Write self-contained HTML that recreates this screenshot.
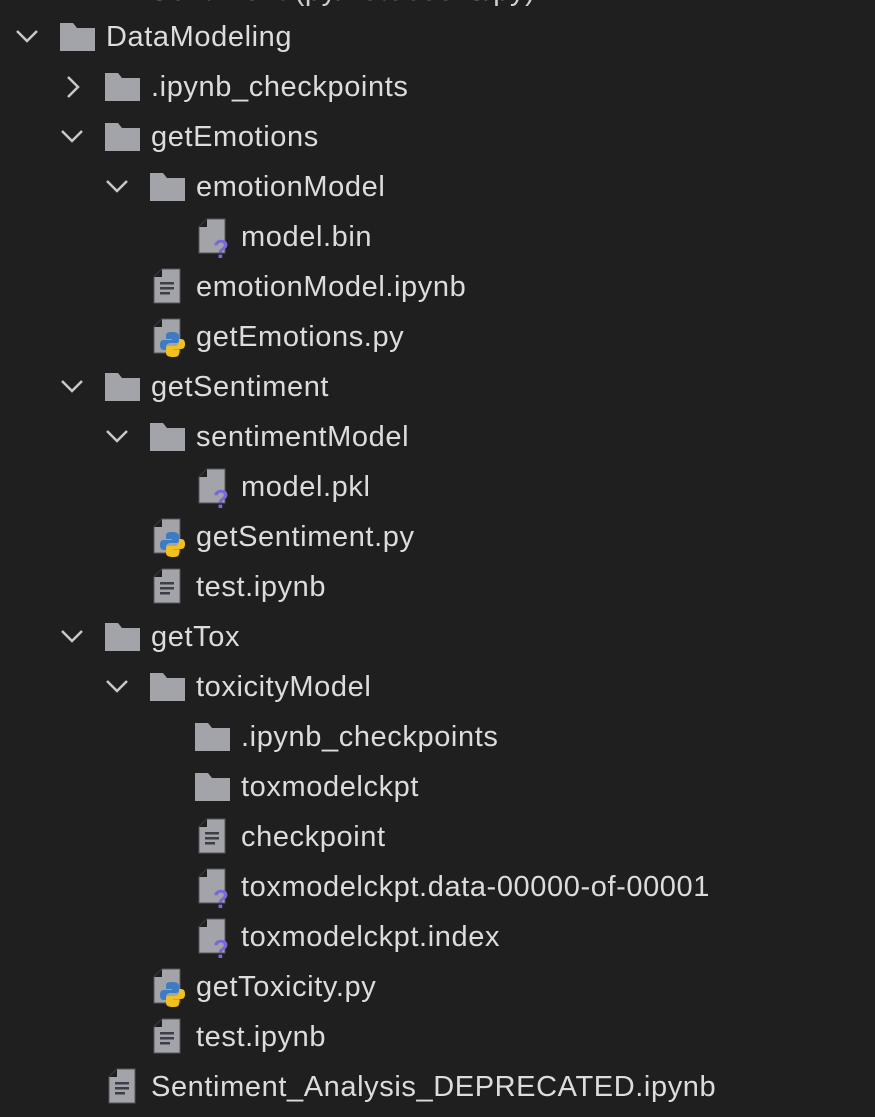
<!DOCTYPE html>
<html><head><meta charset="utf-8"><style>
body{margin:0;background:#1f1f1f;width:875px;height:1117px;overflow:hidden;position:relative;font-family:"Liberation Sans","DejaVu Sans",sans-serif;}
.r{position:absolute;height:50px;left:0;right:0}
.t{position:absolute;top:9px;font-size:29px;letter-spacing:0.6px;color:#dcdcdc;line-height:32px;white-space:nowrap}
svg{position:absolute}
</style></head><body>
<div class="r" style="top:-34px"><span class="t" style="left:150px;color:#cfcfcf">Sentiment (py/notebooks/py)</span></div>
<script>
const items=[
[0,'o','DataModeling'],[1,'c','.ipynb_checkpoints'],[1,'o','getEmotions'],[2,'o','emotionModel'],[3,'u','model.bin'],[2,'d','emotionModel.ipynb'],[2,'p','getEmotions.py'],[1,'o','getSentiment'],[2,'o','sentimentModel'],[3,'u','model.pkl'],[2,'p','getSentiment.py'],[2,'d','test.ipynb'],[1,'o','getTox'],[2,'o','toxicityModel'],[3,'f','.ipynb_checkpoints'],[3,'f','toxmodelckpt'],[3,'d','checkpoint'],[3,'u','toxmodelckpt.data-00000-of-00001'],[3,'u','toxmodelckpt.index'],[2,'p','getToxicity.py'],[2,'d','test.ipynb'],[1,'d','Sentiment_Analysis_DEPRECATED.ipynb']];
const G='#a3a3aa';
const folder=`<path d="M0 0H13L17 5H35V28H0Z" fill="${G}"/>`;
const fileBase=`<path d="M8 0H26V34H0V8Z" fill="${G}" stroke="#55555c" stroke-width="1"/><path d="M0 8L8 0V8Z" fill="#1f1f1f"/>`;
let h='';
items.forEach((it,i)=>{const [L,k,n]=it;const y=12+50*i;const tx=106+45*L;
h+=`<div class="r" style="top:${y}px">`;
if(k=='o')h+=`<svg style="left:${15+45*L}px;top:16px" width="24" height="16"><path d="M2 3L12 13L22 3" stroke="#c8c8c8" stroke-width="2.5" fill="none"/></svg>`;
if(k=='c')h+=`<svg style="left:${20+45*L}px;top:13px" width="16" height="24"><path d="M3 2L13 12L3 22" stroke="#c8c8c8" stroke-width="2.5" fill="none"/></svg>`;
if(k=='o'||k=='c'||k=='f')h+=`<svg style="left:${tx-46}px;top:11px" width="35" height="28">${folder}</svg>`;
else{let extra='';
if(k=='d')extra=`<rect x="6" y="13" width="14" height="2.5" fill="#3e3e48"/><rect x="6" y="18" width="14" height="2.5" fill="#3e3e48"/><rect x="6" y="23" width="10" height="2.5" fill="#3e3e48"/>`;
if(k=='u')extra=`<text x="14" y="39" font-size="26" font-weight="bold" fill="#7b68d8" font-family="Liberation Sans">?</text>`;
if(k=='p')extra=`<path d="M18 13c-5 0-6 1-6 4v3h6v1h-8c-3 0-4 2-4 5s1 5 4 5h2v-3c0-2 2-4 4-4h6c2 0 3-1 3-3v-4c0-3-3-4-7-4z" fill="#3e7bc0"/><path d="M19 38c5 0 6-1 6-4v-3h-6v-1h8c3 0 4-2 4-5s-1-5-4-5h-2v3c0 2-2 4-4 4h-6c-2 0-3 1-3 3v4c0 3 3 4 7 4z" fill="#f0c020"/>`;
h+=`<svg style="left:${tx-42}px;top:7px;overflow:visible" width="36" height="40">${fileBase}${extra}</svg>`;}
h+=`<span class="t" style="left:${tx}px">${n}</span></div>`;});
document.write(h);
</script>
</body></html>
